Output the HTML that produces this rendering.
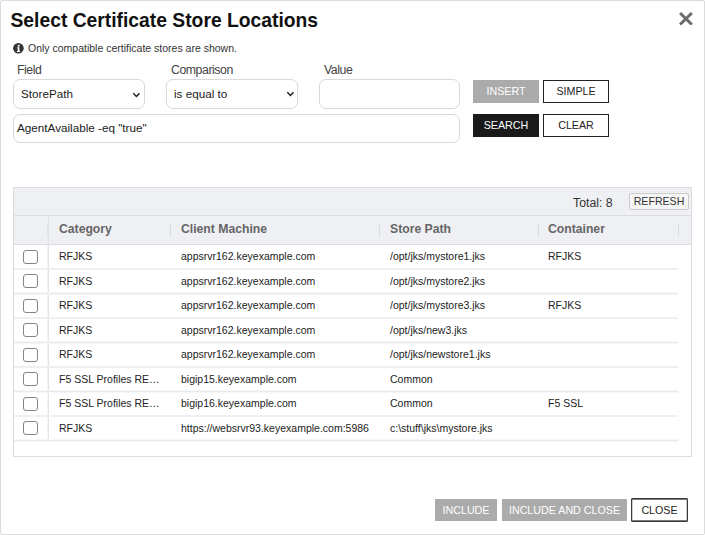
<!DOCTYPE html>
<html><head><meta charset="utf-8">
<style>
*{box-sizing:border-box;margin:0;padding:0}
html,body{width:705px;height:535px;overflow:hidden;background:#fff;font-family:"Liberation Sans",sans-serif;color:#222}
.dlg{position:absolute;left:0;top:0;width:705px;height:535px;border:1px solid #dcdcdc;border-radius:2px;background:#fff}
.abs{position:absolute;white-space:nowrap}
.title{left:10.5px;top:9px;font-size:19.3px;font-weight:bold;color:#111;line-height:24px}
.close{left:678px;top:9px;width:16px;height:16px}
.info{left:13px;top:43px;width:11px;height:11px;border-radius:50%;background:#444}
.infotxt{left:28px;top:42.3px;font-size:10.5px;color:#333;line-height:13px}
.lbl{font-size:12.3px;letter-spacing:-0.45px;color:#444;line-height:14px;top:62.5px}
.sel{border:1px solid #d9d9d9;border-radius:7px;height:30px;top:79px}
.seltxt{font-size:11.7px;color:#222;line-height:14px}
.btn{height:23px;font-size:10.7px;text-align:center;line-height:21px;border:1px solid #222}
.g-tool{left:13px;top:186px;width:679px;height:30px;background:#eff0f4;border:1px solid #dcdde2}
.hdr{left:13px;top:215px;width:679px;height:30px;background:#eff0f4;border-bottom:1px solid #dcdde2}
.hd{font-size:12.2px;font-weight:bold;color:#666;top:222px;line-height:14px}
.vsep{width:1px;background:#dcdde2}
.row{left:14px;width:664px;height:2px;background:#eff0f3}
.cell{font-size:10.5px;color:#222;line-height:13px}
.cb{width:14.6px;height:14px;border:1px solid #7f878b;border-radius:3px;left:23px;background:#fff}
</style></head><body>
<div class="dlg"></div>
<div class="abs title">Select Certificate Store Locations</div>
<svg class="abs" style="left:679px;top:11.6px" width="14" height="13.6" viewBox="0 0 14 13.6"><path d="M1.05 1.05L12.85 12.55M12.85 1.05L1.05 12.55" stroke="#6b6b6b" stroke-width="2.95"/></svg>
<svg class="abs" style="left:12.8px;top:43.2px" width="11" height="11" viewBox="0 0 11 11"><circle cx="5.4" cy="5.3" r="5.3" fill="#333"/><circle cx="5.7" cy="2.7" r="1.05" fill="#fff"/><path d="M4.1 4.3H6.4V8H7.1V9H3.9V8H4.7V5.3H4.1Z" fill="#fff"/></svg>
<div class="abs infotxt">Only compatible certificate stores are shown.</div>

<div class="abs lbl" style="left:17px">Field</div>
<div class="abs lbl" style="left:171px">Comparison</div>
<div class="abs lbl" style="left:324px">Value</div>

<div class="abs sel" style="left:13px;width:132px"></div>
<div class="abs seltxt" style="left:21px;top:87px">StorePath</div>
<svg class="abs" style="left:132.2px;top:91.6px" width="9" height="6" viewBox="0 0 9 6"><path d="M1.3 1.3L4.4 4.4L7.5 1.3" stroke="#1a1a1a" stroke-width="1.4" fill="none"/></svg>

<div class="abs sel" style="left:166px;width:132px"></div>
<div class="abs seltxt" style="left:174px;top:87px">is equal to</div>
<svg class="abs" style="left:285.5px;top:91.4px" width="9" height="6" viewBox="0 0 9 6"><path d="M1.3 1.3L4.4 4.4L7.5 1.3" stroke="#1a1a1a" stroke-width="1.4" fill="none"/></svg>

<div class="abs sel" style="left:319px;width:141px;height:30px"></div>
<div class="abs sel" style="left:13px;top:114px;width:447px;height:29px"></div>
<div class="abs seltxt" style="left:17px;top:121px">AgentAvailable -eq "true"</div>

<div class="abs btn" style="left:473px;top:80px;width:66px;background:#ababab;border-color:#ababab;color:#fff">INSERT</div>
<div class="abs btn" style="left:543px;top:80px;width:66px;background:#fff;color:#222">SIMPLE</div>
<div class="abs btn" style="left:473px;top:114px;width:66px;background:#1a1a1a;border-color:#1a1a1a;color:#fff">SEARCH</div>
<div class="abs btn" style="left:543px;top:114px;width:66px;background:#fff;color:#222">CLEAR</div>

<!-- grid -->
<div class="abs" style="left:13px;top:187px;width:679px;height:270px;border:1px solid #dcdde2;background:#fff"></div>
<div class="abs" style="left:14px;top:188px;width:677px;height:56px;background:#eff0f4"></div>
<div class="abs" style="left:14px;top:215px;width:677px;height:1px;background:#dcdde2"></div>
<div class="abs" style="left:14px;top:244px;width:677px;height:1px;background:#dcdde2"></div>
<div class="abs" style="left:573px;top:196px;font-size:12.3px;color:#333;line-height:14px">Total: 8</div>
<div class="abs" style="left:629px;top:193px;width:60px;height:17px;border:1px solid #ccc;border-radius:2px;background:#f6f6f6;font-size:10.6px;line-height:15px;text-align:center;color:#333">REFRESH</div>

<div class="abs vsep" style="left:48px;top:216px;height:225px;background:#e2e4e9"></div>
<div class="abs vsep" style="left:47px;top:245px;height:196px;background:#f3f4f6"></div>
<div class="abs vsep" style="left:47px;top:223px;height:14px;background:#e4e5ea"></div>
<div class="abs vsep" style="left:170px;top:223px;height:14px"></div>
<div class="abs vsep" style="left:379px;top:223px;height:14px"></div>
<div class="abs vsep" style="left:538px;top:223px;height:14px"></div>
<div class="abs vsep" style="left:678px;top:223px;height:14px"></div>

<div class="abs hd" style="left:59px">Category</div>
<div class="abs hd" style="left:181px">Client Machine</div>
<div class="abs hd" style="left:390px">Store Path</div>
<div class="abs hd" style="left:548px">Container</div>

<!--ROWS-->
<div class="abs row" style="top:268px"></div>
<div class="abs cb" style="top:249.80px"></div>
<div class="abs cell" style="left:59px;top:250.00px">RFJKS</div>
<div class="abs cell" style="left:181px;top:250.00px">appsrvr162.keyexample.com</div>
<div class="abs cell" style="left:390px;top:250.00px">/opt/jks/mystore1.jks</div>
<div class="abs cell" style="left:548px;top:250.00px">RFJKS</div>
<div class="abs row" style="top:293px;height:1px;background:#e9eaee;box-shadow:0 1px 0 #f6f7f8,0 -1px 0 #f6f7f8"></div>
<div class="abs cb" style="top:274.30px"></div>
<div class="abs cell" style="left:59px;top:274.50px">RFJKS</div>
<div class="abs cell" style="left:181px;top:274.50px">appsrvr162.keyexample.com</div>
<div class="abs cell" style="left:390px;top:274.50px">/opt/jks/mystore2.jks</div>
<div class="abs row" style="top:317px"></div>
<div class="abs cb" style="top:298.80px"></div>
<div class="abs cell" style="left:59px;top:299.00px">RFJKS</div>
<div class="abs cell" style="left:181px;top:299.00px">appsrvr162.keyexample.com</div>
<div class="abs cell" style="left:390px;top:299.00px">/opt/jks/mystore3.jks</div>
<div class="abs cell" style="left:548px;top:299.00px">RFJKS</div>
<div class="abs row" style="top:342px;height:1px;background:#e9eaee;box-shadow:0 1px 0 #f6f7f8,0 -1px 0 #f6f7f8"></div>
<div class="abs cb" style="top:323.30px"></div>
<div class="abs cell" style="left:59px;top:323.50px">RFJKS</div>
<div class="abs cell" style="left:181px;top:323.50px">appsrvr162.keyexample.com</div>
<div class="abs cell" style="left:390px;top:323.50px">/opt/jks/new3.jks</div>
<div class="abs row" style="top:366px"></div>
<div class="abs cb" style="top:347.80px"></div>
<div class="abs cell" style="left:59px;top:348.00px">RFJKS</div>
<div class="abs cell" style="left:181px;top:348.00px">appsrvr162.keyexample.com</div>
<div class="abs cell" style="left:390px;top:348.00px">/opt/jks/newstore1.jks</div>
<div class="abs row" style="top:391px;height:1px;background:#e9eaee;box-shadow:0 1px 0 #f6f7f8,0 -1px 0 #f6f7f8"></div>
<div class="abs cb" style="top:372.30px"></div>
<div class="abs cell" style="left:59px;top:372.50px">F5 SSL Profiles RE…</div>
<div class="abs cell" style="left:181px;top:372.50px">bigip15.keyexample.com</div>
<div class="abs cell" style="left:390px;top:372.50px">Common</div>
<div class="abs row" style="top:415px"></div>
<div class="abs cb" style="top:396.80px"></div>
<div class="abs cell" style="left:59px;top:397.00px">F5 SSL Profiles RE…</div>
<div class="abs cell" style="left:181px;top:397.00px">bigip16.keyexample.com</div>
<div class="abs cell" style="left:390px;top:397.00px">Common</div>
<div class="abs cell" style="left:548px;top:397.00px">F5 SSL</div>
<div class="abs row" style="top:440px;height:1px;background:#e9eaee;box-shadow:0 1px 0 #f6f7f8,0 -1px 0 #f6f7f8"></div>
<div class="abs cb" style="top:421.30px"></div>
<div class="abs cell" style="left:59px;top:421.50px">RFJKS</div>
<div class="abs cell" style="left:181px;top:421.50px">https://websrvr93.keyexample.com:5986</div>
<div class="abs cell" style="left:390px;top:421.50px">c:\stuff\jks\mystore.jks</div>
<!--/ROWS-->

<div class="abs btn" style="left:435px;top:499px;width:62px;height:22px;line-height:20px;background:#ababab;border-color:#ababab;color:#fff">INCLUDE</div>
<div class="abs btn" style="left:502px;top:499px;width:125px;height:22px;line-height:20px;background:#ababab;border-color:#ababab;color:#fff">INCLUDE AND CLOSE</div>
<div class="abs btn" style="left:631px;top:498px;width:57px;height:24px;background:#fff;border:1px solid #3a3a3a;box-shadow:inset 0 1px 0 #777,inset 0 -1px 0 #777,inset 1px 0 0 #ccc,inset -1px 0 0 #ccc;border-radius:1px;color:#222;line-height:22px">CLOSE</div>
</body></html>
